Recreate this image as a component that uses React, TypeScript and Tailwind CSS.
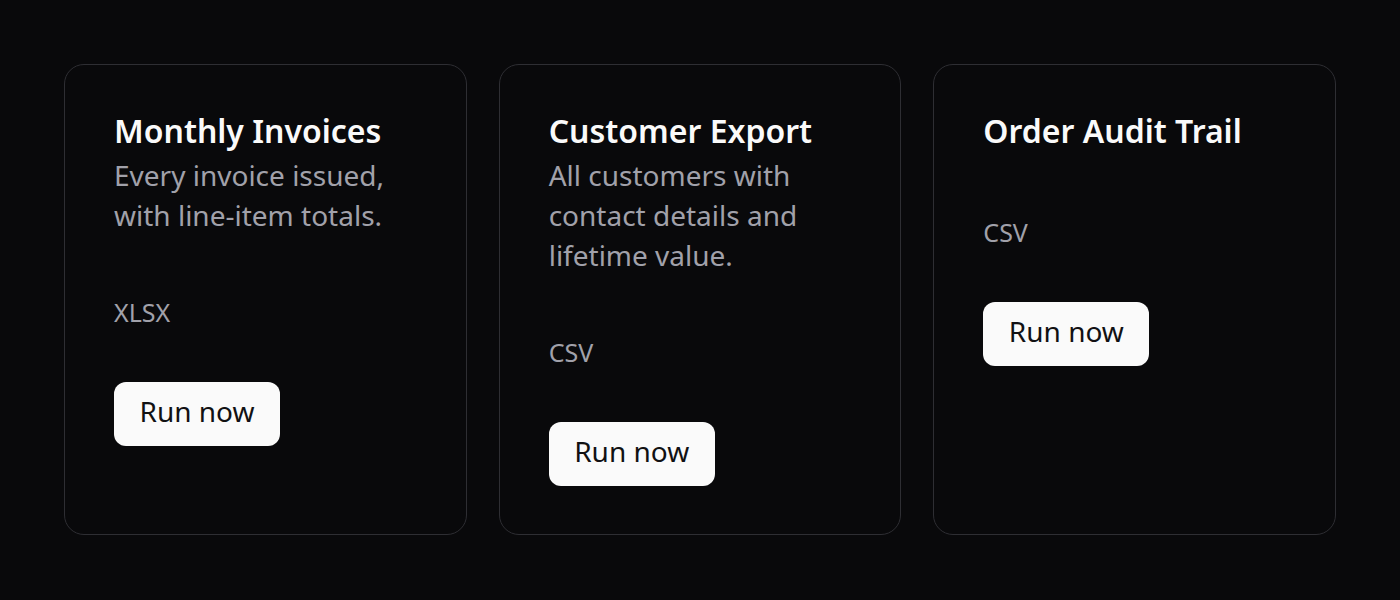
import React from "react";

const cards = [
  { title: "Monthly Invoices", desc: "Every invoice issued, with line-item totals.", format: "XLSX" },
  { title: "Customer Export", desc: "All customers with contact details and lifetime value.", format: "CSV" },
  { title: "Order Audit Trail", desc: "", format: "CSV" },
];

export default function App() {
  return (
    <div
      className="min-h-[600px] w-full bg-[#09090b] px-16 py-16"
      style={{ fontFamily: '"Noto Sans", "Open Sans", sans-serif' }}
    >
      <div className="grid grid-cols-3 gap-8">
        {cards.map((c) => (
          <div key={c.title} className="flex flex-col items-start rounded-[20px] border border-[#2e2e33] bg-[#09090b] px-[49px] py-12">
            <h2 className="text-[32px] font-semibold leading-[36px] text-[#fafafa]">{c.title}</h2>
            <p className="mt-[6px] text-[28px] leading-[40px] text-[#a1a1aa]">{c.desc}</p>
            <div className="mt-[61px] text-[25px] leading-[32px] text-[#a1a1aa]">{c.format}</div>
            <button className="mt-[54px] flex h-16 w-[166px] items-center justify-center rounded-xl bg-[#fafafa] pb-[6px] text-[28px] leading-[36px] text-[#111113]">
              Run now
            </button>
          </div>
        ))}
      </div>
    </div>
  );
}
